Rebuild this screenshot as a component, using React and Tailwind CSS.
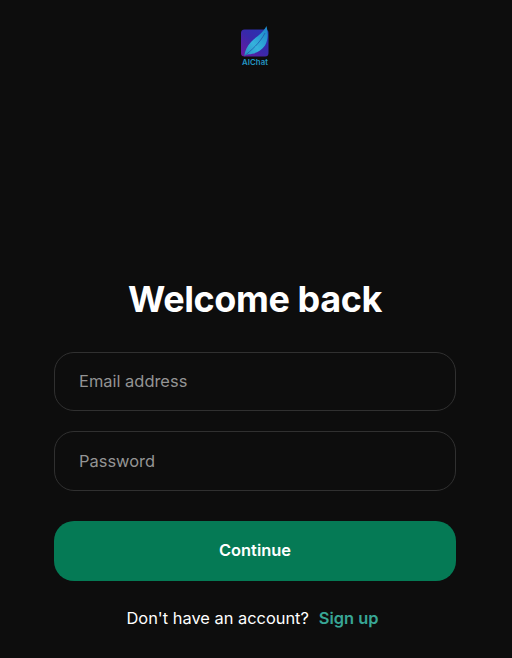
function Logo() {
  return (
    <svg width="30" height="42" viewBox="0 0 30 42" role="img" aria-label="AIChat">
      <defs>
        <linearGradient id="tile" x1="0" y1="1" x2="1" y2="0">
          <stop offset="0" stopColor="#6d189f" />
          <stop offset="0.5" stopColor="#3928aa" />
          <stop offset="1" stopColor="#2536b2" />
        </linearGradient>
        <linearGradient id="feather" x1="0" y1="1" x2="1" y2="0">
          <stop offset="0" stopColor="#2b8fc4" />
          <stop offset="0.4" stopColor="#35b2dc" />
          <stop offset="1" stopColor="#1b82c9" />
        </linearGradient>
      </defs>
      <rect x="1" y="4.5" width="27.5" height="27" rx="3.5" fill="url(#tile)" />
      <path d="M4.3 31C4.800 26 7 21 11 17C15 12.500 23 8.500 26.500 1C28.300 8 28.300 15 25 20.500C21 26.500 14 29 9 29.200C7 29.400 5.500 30.300 4.300 31Z" fill="url(#feather)" />
      <path d="M4.300 31C11 25.500 20 18 25 8" fill="none" stroke="#1f4da8" strokeWidth="0.7" />
      <text x="15" y="39.500" textAnchor="middle" textLength="26" fill="#2496c5" className="font-['Inter',sans-serif] text-[7.8px] font-semibold">AIChat</text>
    </svg>
  );
}

function Field({ type, label, className }) {
  return (
    <input
      type={type}
      placeholder={label}
      aria-label={label}
      className={`block w-full rounded-[20px] border border-[#303030] bg-transparent px-6 text-[16.45px] text-white outline-none placeholder:text-[#949494] ${className}`}
    />
  );
}

export default function App() {
  return (
    <div className="flex h-[658px] w-full flex-col bg-[#0d0d0d] font-['Inter',sans-serif] text-white">
      <header className="flex h-[70px] justify-center pt-[25px] pr-0.5">
        <Logo />
      </header>
      <main className="ml-[54px] flex w-[402px] flex-col pt-[207px]">
        <h1 className="text-center text-4xl leading-[44px] font-bold tracking-[-0.42px]">Welcome back</h1>
        <form className="mt-[31px] flex flex-col" onSubmit={(e) => e.preventDefault()}>
          <Field type="email" label="Email address" className="h-[59px] pb-0.5" />
          <Field type="password" label="Password" className="mt-5 h-[60px]" />
          <button className="mt-[30px] h-[60px] rounded-[20px] bg-[#057a55] pb-0.5 text-[16.4px] font-semibold">
            Continue
          </button>
        </form>
        <p className="mt-[25px] flex justify-center gap-2.5 pr-[5px] text-[16.4px] leading-6">
          <span>Don't have an account?</span>
          <a href="#" className="font-semibold text-[#38a695]">Sign up</a>
        </p>
      </main>
    </div>
  );
}
